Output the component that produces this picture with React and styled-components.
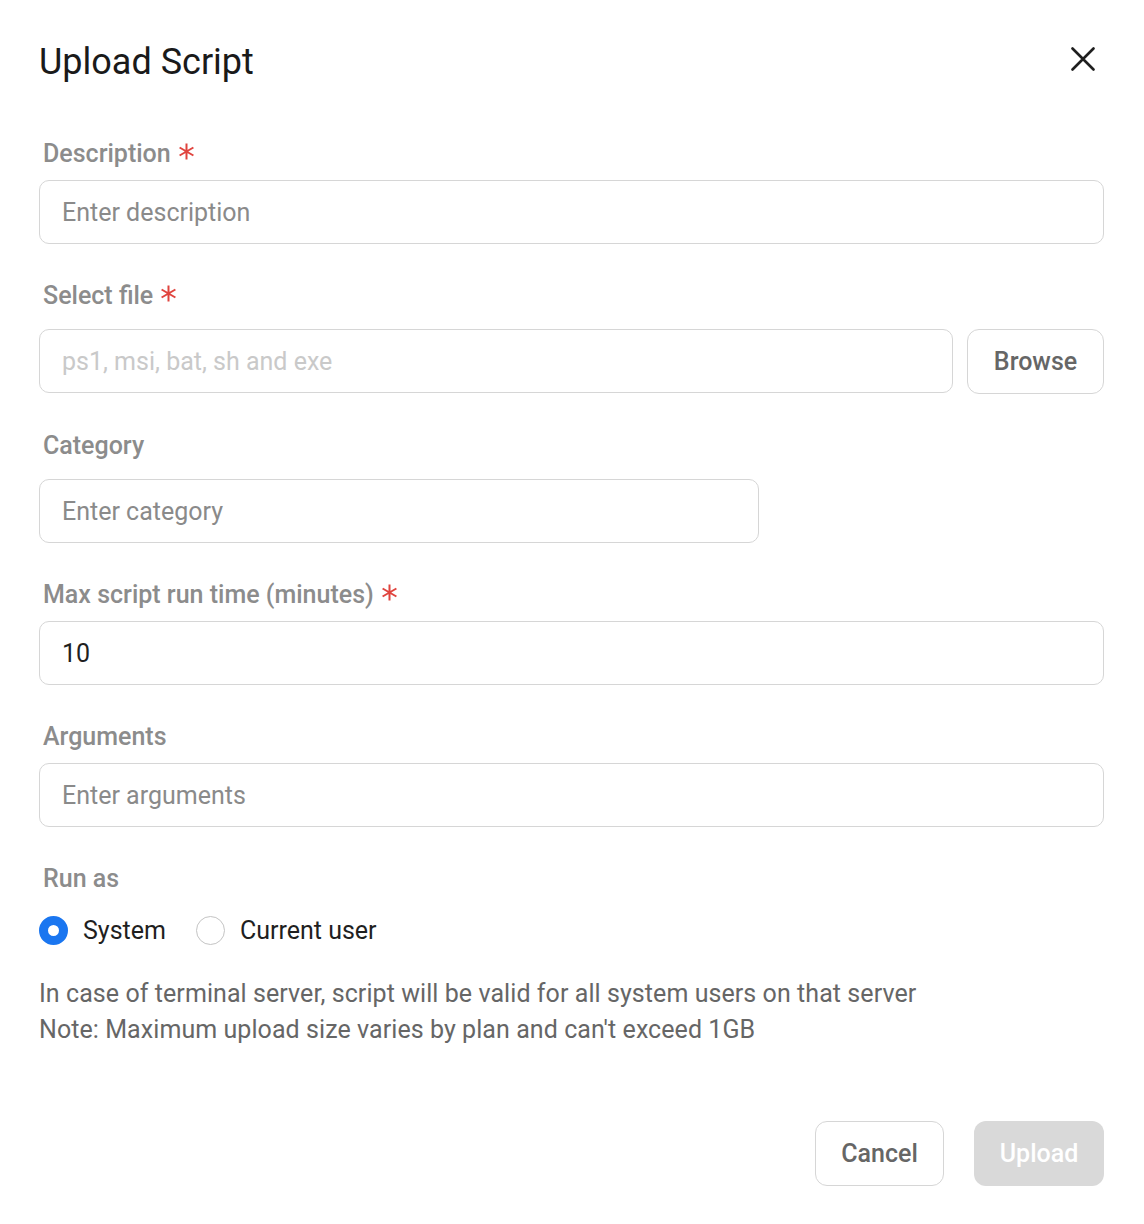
import React, { useState } from "react";
import styled, { createGlobalStyle } from "styled-components";

const GlobalStyle = createGlobalStyle`
  html, body {
    margin: 0;
    padding: 0;
    background: #ffffff;
    font-family: Roboto, "Noto Sans", Arial, sans-serif;
  }
  * { box-sizing: border-box; }
`;

// thin six-arm asterisk used for required fields
const Required = () => (
  <ReqIcon width="17" height="17" viewBox="0 0 17 17">
    <path
      d="M8.5 0.5 V16.5 M1.6 4.5 L15.4 12.5 M1.6 12.5 L15.4 4.5"
      stroke="#e0443e"
      strokeWidth="2"
    />
  </ReqIcon>
);

const App = () => {
  const [runAs, setRunAs] = useState("system");

  return (
    <React.Fragment>
      <GlobalStyle />
      <Modal>
        <Header>
          <Title>Upload Script</Title>
          <CloseButton aria-label="Close">
            <svg width="24" height="24" viewBox="0 0 24 24">
              <path
                d="M1.5 1.5 L22.5 22.5 M22.5 1.5 L1.5 22.5"
                stroke="#1f1f1f"
                strokeWidth="2.6"
                strokeLinecap="round"
              />
            </svg>
          </CloseButton>
        </Header>

        <Field>
          <Label>
            Description
            <Required />
          </Label>
          <Input placeholder="Enter description" />
        </Field>

        <Field>
          <Label>
            Select file
            <Required />
          </Label>
          <FileRow>
            <Input placeholder="ps1, msi, bat, sh and exe" light readOnly grow />
            <OutlineButton width="137px">Browse</OutlineButton>
          </FileRow>
        </Field>

        <Field>
          <Label>Category</Label>
          <Input placeholder="Enter category" width="720px" offset />
        </Field>

        <Field>
          <Label>
            Max script run time (minutes)
            <Required />
          </Label>
          <Input defaultValue="10" />
        </Field>

        <Field>
          <Label>Arguments</Label>
          <Input placeholder="Enter arguments" />
        </Field>

        <RunAs>
          <Label>Run as</Label>
          <RadioRow>
            <RadioOption onClick={() => setRunAs("system")}>
              <RadioDot checked={runAs === "system"} />
              System
            </RadioOption>
            <RadioOption onClick={() => setRunAs("user")}>
              <RadioDot checked={runAs === "user"} />
              Current user
            </RadioOption>
          </RadioRow>
        </RunAs>

        <Notes>
          <div>In case of terminal server, script will be valid for all system users on that server</div>
          <div>Note: Maximum upload size varies by plan and can't exceed 1GB</div>
        </Notes>

        <Footer>
          <OutlineButton width="129px">Cancel</OutlineButton>
          <PrimaryButton disabled>Upload</PrimaryButton>
        </Footer>
      </Modal>
    </React.Fragment>
  );
};

const Modal = styled.div`
  width: 1144px;
  min-height: 1224px;
  padding: 38px 40px 0 39px;
  background: #ffffff;
  display: flex;
  flex-direction: column;
`;

const Header = styled.div`
  display: flex;
  justify-content: space-between;
  align-items: center;
  height: 48px;
  margin-bottom: 53px;
`;

const Title = styled.h1`
  margin: 0;
  font-size: 36px;
  line-height: 48px;
  font-weight: 400;
  color: #1a1a1a;
`;

const CloseButton = styled.button`
  border: none;
  background: none;
  padding: 0;
  margin-right: 9px;
  margin-top: -6px;
  display: flex;
  cursor: pointer;
`;

const Field = styled.div`
  display: flex;
  flex-direction: column;
  margin-bottom: 37px;
`;

const RunAs = styled.div`
  display: flex;
  flex-direction: column;
`;

const Label = styled.label`
  display: flex;
  align-items: center;
  margin-left: 4px;
  margin-bottom: 13px;
  height: 28px;
  font-size: 25px;
  font-weight: 500;
  color: #8c8c8c;
`;

const ReqIcon = styled.svg`
  margin-left: 7px;
  margin-top: -4px;
  flex: none;
`;

const Input = styled.input`
  width: ${(p) => p.width || "100%"};
  flex: ${(p) => (p.grow ? "1" : "none")};
  min-width: 0;
  height: 64px;
  margin-top: ${(p) => (p.offset ? "7px" : "0")};
  padding: 0 22px;
  border: 1px solid #d6d6d6;
  border-radius: 10px;
  font-family: Roboto, "Noto Sans", Arial, sans-serif;
  font-size: 25px;
  color: #1f1f1f;
  outline: none;
  background: #ffffff;
  &::placeholder {
    color: ${(p) => (p.light ? "#c9c9c9" : "#8a8a8a")};
  }
`;

const FileRow = styled.div`
  display: flex;
  gap: 14px;
  margin-top: 7px;
`;

const OutlineButton = styled.button`
  width: ${(p) => p.width};
  height: 65px;
  flex: none;
  border: 1px solid #d6d6d6;
  border-radius: 12px;
  background: #ffffff;
  font-family: Roboto, "Noto Sans", Arial, sans-serif;
  font-size: 25px;
  font-weight: 500;
  color: #666666;
  cursor: pointer;
`;

const PrimaryButton = styled.button`
  width: 130px;
  height: 65px;
  border: none;
  border-radius: 12px;
  background: ${(p) => (p.disabled ? "#d9d9d9" : "#1a73e8")};
  font-family: Roboto, "Noto Sans", Arial, sans-serif;
  font-size: 25px;
  font-weight: 500;
  color: #ffffff;
`;

const RadioRow = styled.div`
  display: flex;
  align-items: center;
  height: 30px;
  gap: 30px;
  margin-top: 10px;
`;

const RadioOption = styled.div`
  display: flex;
  align-items: center;
  gap: 15px;
  font-size: 25px;
  color: #1f1f1f;
  cursor: pointer;
`;

const RadioDot = styled.span`
  width: 29px;
  height: 29px;
  border-radius: 50%;
  flex: none;
  border: ${(p) => (p.checked ? "9px solid #1a76f0" : "1px solid #c4c4c4")};
  background: #ffffff;
`;

const Notes = styled.div`
  font-size: 25px;
  line-height: 36px;
  letter-spacing: 0.07px;
  color: #666666;
  margin-top: 31px;
`;

const Footer = styled.div`
  display: flex;
  justify-content: flex-end;
  gap: 30px;
  margin-top: 73px;
`;

export default App;
